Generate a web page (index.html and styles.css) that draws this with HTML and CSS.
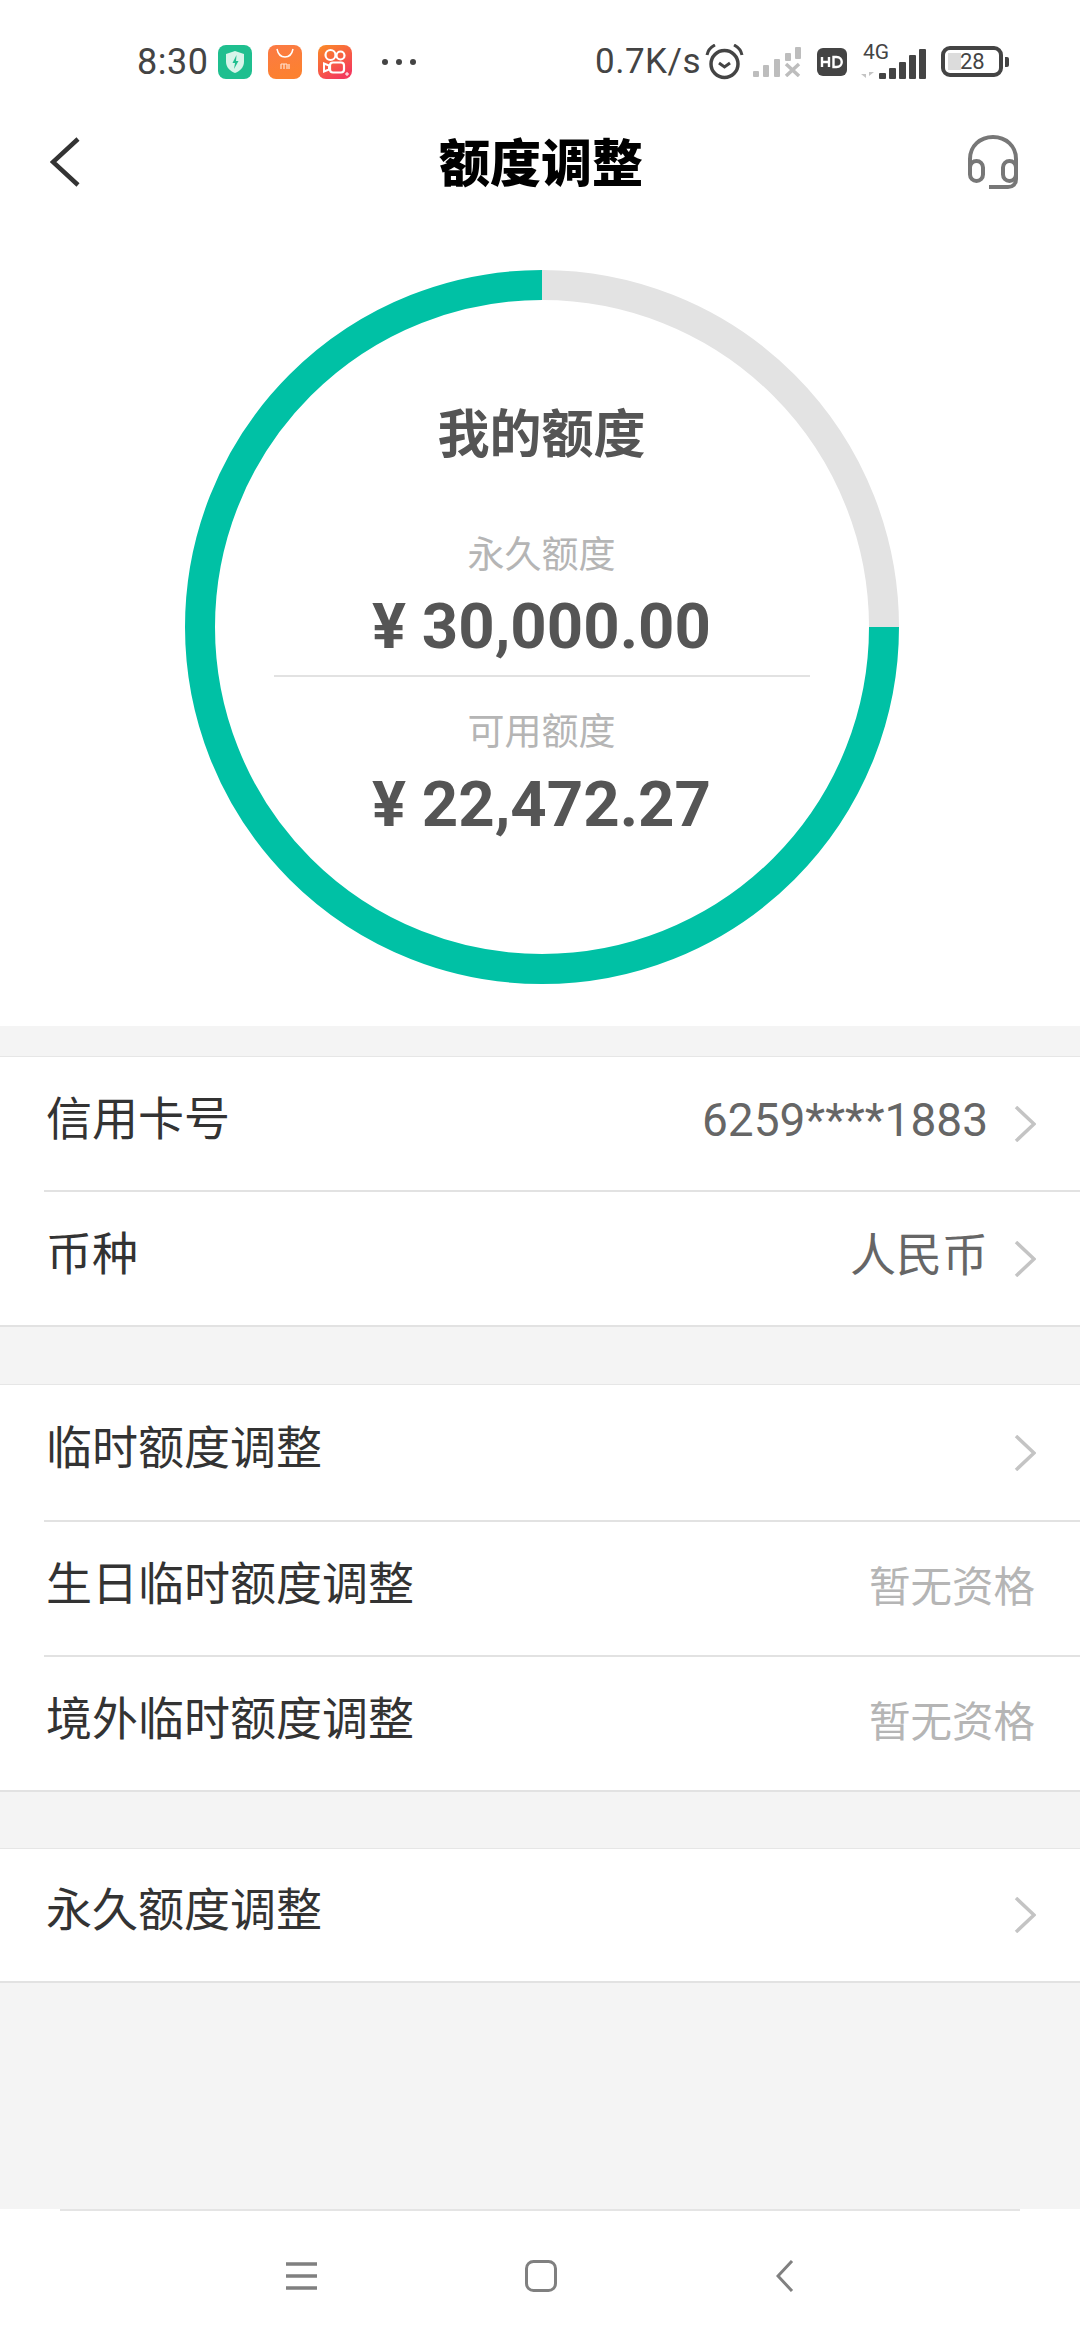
FILE: index.html
```html
<!DOCTYPE html>
<html lang="zh-CN">
<head>
    <meta charset="UTF-8">
    <meta name="viewport" content="width=device-width, initial-scale=1.0">
    <title>额度调整</title>
    <link rel="stylesheet" href="styles.css">
</head>
<body>
    <div class="page">
        <div class="status-bar">
            <span class="time">8:30</span>
            <svg class="app-icon" viewBox="0 0 34 34">
                <rect width="34" height="34" rx="8" fill="#1fbf8f"/>
                <path d="M17 6l9 3v8c0 5-4 9-9 11-5-2-9-6-9-11V9z" fill="#d8f5ea"/>
                <path d="M18.500 10l-4 8h2.500l-1 6 4.500-8h-2.500z" fill="#1fbf8f"/>
            </svg>
            <svg class="app-icon" viewBox="0 0 34 34">
                <defs>
                    <linearGradient id="mi" x1="0" y1="0" x2="0.300" y2="1">
                        <stop offset="0" stop-color="#fb7a45"/>
                        <stop offset="1" stop-color="#fc8130"/>
                    </linearGradient>
                </defs>
                <rect width="34" height="34" rx="8" fill="url(#mi)"/>
                <path d="M9 4c1 5 4 8 8 8s7-3 8-8" fill="none" stroke="#fff" stroke-width="1.500"/>
                <path d="M13 24v-5M16 24v-5M19 24v-5M13 19h6M21 19v5" fill="none" stroke="#ffe3d2" stroke-width="1.200"/>
            </svg>
            <svg class="app-icon" viewBox="0 0 34 34">
                <defs>
                    <linearGradient id="ks" x1="0" y1="0" x2="0.600" y2="1">
                        <stop offset="0" stop-color="#fb8d25"/>
                        <stop offset="1" stop-color="#f43a5c"/>
                    </linearGradient>
                </defs>
                <rect width="34" height="34" rx="8" fill="url(#ks)"/>
                <circle cx="12.500" cy="10" r="5" fill="none" stroke="#fff" stroke-width="2.200"/>
                <circle cx="22.500" cy="10.500" r="4" fill="none" stroke="#fff" stroke-width="2.200"/>
                <rect x="12" y="17.500" width="14" height="10" rx="3" fill="none" stroke="#fff" stroke-width="2.200"/>
                <path d="M11 20.500l-5-2v8l5-2z" fill="none" stroke="#fff" stroke-width="2"/>
                <path d="M27 29h4M29 27v4" stroke="#fff" stroke-width="1"/>
            </svg>
            <svg class="dots" viewBox="0 0 34 6">
                <circle cx="3" cy="3" r="3" fill="#444"/>
                <circle cx="17" cy="3" r="3" fill="#444"/>
                <circle cx="31" cy="3" r="3" fill="#444"/>
            </svg>
            <span class="speed">0.7K/s</span>
            <svg class="alarm" viewBox="0 0 39 36">
                <circle cx="19.500" cy="20" r="13.500" fill="none" stroke="#444" stroke-width="3.500"/>
                <path d="M14 19l5.500 4 5.500-4" fill="none" stroke="#444" stroke-width="3"/>
                <path d="M2 11C3 6 6 3 10 1M37 11c-1-5-4-8-8-10" fill="none" stroke="#444" stroke-width="3"/>
            </svg>
            <svg class="signal-off" viewBox="0 0 48 30">
                <g fill="#bdbdbd">
                    <rect x="0" y="24" width="6" height="6" rx="1"/>
                    <rect x="10" y="18" width="6" height="12" rx="1"/>
                    <rect x="21" y="12" width="6" height="18" rx="1"/>
                    <rect x="32" y="6" width="6" height="8" rx="1"/>
                    <rect x="42" y="0" width="6" height="12" rx="1"/>
                </g>
                <path d="M33 17l13 12M46 17L33 29" stroke="#bdbdbd" stroke-width="3.500"/>
            </svg>
            <svg class="hd" viewBox="0 0 30 28">
                <rect width="30" height="28" rx="6" fill="#444"/>
                <path d="M5 9v10M12 9v10M5 14h7M16.500 9v10h3c7 0 7-10 0-10z" fill="none" stroke="#fff" stroke-width="2.400"/>
            </svg>
            <div class="net">
                <span class="net-label">4G</span>
                <svg class="net-bars" viewBox="0 0 66 36">
                    <path d="M6 24v10l-5-4h5zM9 22v10l5-4H9z" fill="#c4c4c4"/>
                    <g fill="#444">
                        <rect x="19" y="29" width="7" height="6" rx="1"/>
                        <rect x="29" y="24" width="7" height="11" rx="1"/>
                        <rect x="39" y="18" width="7" height="17" rx="1"/>
                        <rect x="49" y="11" width="7" height="24" rx="1"/>
                        <rect x="59" y="5" width="7" height="30" rx="1"/>
                    </g>
                </svg>
            </div>
            <div class="battery">
                <div class="battery-body">
                    <span class="battery-fill"></span>
                    <span class="battery-text">28</span>
                </div>
                <span class="battery-nub"></span>
            </div>
        </div>

        <div class="header">
            <svg class="back" viewBox="0 0 30 50">
                <path d="M28 2L3 25l25 23" fill="none" stroke="#333" stroke-width="4.500"/>
            </svg>
            <h1>额度调整</h1>
            <svg class="headset" viewBox="0 0 52 56">
                <path d="M3 36V24C3 11 13 2 26 2s23 9 23 22v20c0 5-3 8-8 8H22" fill="none" stroke="#777" stroke-width="4"/>
                <rect x="3" y="26" width="13" height="20" rx="6.500" fill="none" stroke="#777" stroke-width="4"/>
                <rect x="36" y="26" width="13" height="20" rx="6.500" fill="none" stroke="#777" stroke-width="4"/>
            </svg>
        </div>

        <div class="quota">
            <div class="ring">
                <svg class="ring-svg" viewBox="0 0 714 714">
                    <path d="M357 15A342 342 0 0 1 699 357" fill="none" stroke="#e3e3e3" stroke-width="30"/>
                    <path d="M699 357A342 342 0 1 1 357 15" fill="none" stroke="#00c1a5" stroke-width="30"/>
                </svg>
                <h2>我的额度</h2>
                <div class="quota-label first">永久额度</div>
                <div class="quota-amount">¥ 30,000.00</div>
                <div class="quota-line"></div>
                <div class="quota-label second">可用额度</div>
                <div class="quota-amount second">¥ 22,472.27</div>
            </div>
        </div>

        <div class="group first-group">
            <div class="row">
                <span class="row-label">信用卡号</span>
                <span class="row-value">6259****1883</span>
                <svg class="chevron" viewBox="0 0 22 36"><path d="M2 1l18 17L2 35" fill="none" stroke="#c4c4c4" stroke-width="3.500"/></svg>
            </div>
            <div class="row">
                <span class="row-label">币种</span>
                <span class="row-value">人民币</span>
                <svg class="chevron" viewBox="0 0 22 36"><path d="M2 1l18 17L2 35" fill="none" stroke="#c4c4c4" stroke-width="3.500"/></svg>
            </div>
        </div>

        <div class="group">
            <div class="row">
                <span class="row-label">临时额度调整</span>
                <svg class="chevron" viewBox="0 0 22 36"><path d="M2 1l18 17L2 35" fill="none" stroke="#c4c4c4" stroke-width="3.500"/></svg>
            </div>
            <div class="row">
                <span class="row-label">生日临时额度调整</span>
                <span class="row-note">暂无资格</span>
            </div>
            <div class="row">
                <span class="row-label">境外临时额度调整</span>
                <span class="row-note">暂无资格</span>
            </div>
        </div>

        <div class="group last-group">
            <div class="row">
                <span class="row-label">永久额度调整</span>
                <svg class="chevron" viewBox="0 0 22 36"><path d="M2 1l18 17L2 35" fill="none" stroke="#c4c4c4" stroke-width="3.500"/></svg>
            </div>
        </div>

        <div class="spacer"></div>

        <div class="nav">
            <div class="nav-line"></div>
            <div class="nav-icons">
                <svg class="nav-menu" viewBox="0 0 31 30">
                    <path d="M0 3h31M0 15h31M0 27h31" stroke="#808080" stroke-width="3.500"/>
                </svg>
                <svg class="nav-home" viewBox="0 0 32 32">
                    <rect x="1.500" y="1.500" width="29" height="29" rx="7" fill="none" stroke="#808080" stroke-width="3"/>
                </svg>
                <svg class="nav-back" viewBox="0 0 18 32">
                    <path d="M16 1L2 16l14 15" fill="none" stroke="#808080" stroke-width="3"/>
                </svg>
            </div>
        </div>
    </div>
</body>
</html>
```

FILE: styles.css
```css
* {
    box-sizing: border-box;
}

body {
    margin: 0;
    padding: 0;
    background-color: #f4f4f4;
    font-family: "Noto Sans CJK SC", Roboto, sans-serif;
}

.page {
    width: 1080px;
    height: 2340px;
    display: flex;
    flex-direction: column;
    overflow: hidden;
}

/* status bar */
.status-bar {
    height: 88px;
    padding-top: 35px;
    padding-left: 137px;
    background-color: #fff;
    display: flex;
    align-items: center;
    color: #444;
    font-family: Roboto, sans-serif;
}

.status-bar > * {
    flex-shrink: 0;
}

.time {
    width: 81px;
    font-size: 36px;
    line-height: 40px;
    letter-spacing: 0.5px;
}

.app-icon {
    width: 34px;
    height: 34px;
    margin-right: 16px;
}

.dots {
    width: 34px;
    height: 6px;
    margin-left: 14px;
    margin-right: 179px;
}

.speed {
    width: 110px;
    font-size: 35px;
    line-height: 40px;
    letter-spacing: 0.5px;
}

.alarm {
    width: 39px;
    height: 36px;
    margin-right: 9px;
}

.signal-off {
    width: 48px;
    height: 30px;
    margin-right: 16px;
}

.hd {
    width: 30px;
    height: 28px;
    margin-right: 13px;
}

.net {
    width: 66px;
    height: 36px;
    position: relative;
}

.net-bars {
    width: 66px;
    height: 36px;
    display: block;
}

.net-label {
    position: absolute;
    left: 3px;
    top: -3px;
    font-size: 21px;
    line-height: 22px;
}

.battery {
    margin-left: 15px;
    display: flex;
    align-items: center;
}

.battery-body {
    width: 62px;
    height: 31px;
    border: 4px solid #444;
    border-radius: 9px;
    padding: 3px;
    position: relative;
}

.battery-fill {
    display: block;
    width: 13px;
    height: 17px;
    background-color: #dcdcdc;
}

.battery-text {
    position: absolute;
    left: 15px;
    top: 0;
    font-size: 22px;
    line-height: 23px;
    color: #444;
}

.battery-nub {
    width: 4px;
    height: 10px;
    margin-left: 2px;
    border-radius: 0 2px 2px 0;
    background-color: #444;
}

/* title */
.header {
    height: 152px;
    padding: 0 61px 0 50px;
    background-color: #fff;
    display: grid;
    grid-template-columns: 1fr auto 1fr;
    align-items: center;
}

.back {
    width: 30px;
    height: 50px;
    margin-bottom: 4px;
}

.header h1 {
    margin: 0 0 8px 13px;
    font-size: 51px;
    line-height: 60px;
    font-weight: 900;
    color: #000;
}

.headset {
    width: 52px;
    height: 56px;
    margin-bottom: 2px;
    justify-self: end;
}

/* ring */
.quota {
    height: 786px;
    padding-top: 30px;
    padding-left: 3px;
    background-color: #fff;
    display: flex;
    justify-content: center;
}

.ring {
    width: 714px;
    height: 714px;
    padding-top: 131px;
    display: flex;
    flex-direction: column;
    align-items: center;
    position: relative;
}

.ring-svg {
    position: absolute;
    left: 0;
    top: 0;
    width: 714px;
    height: 714px;
}

.ring h2 {
    margin: 0;
    font-size: 52px;
    line-height: 60px;
    font-weight: 700;
    color: #555;
}

.quota-label {
    font-size: 37px;
    line-height: 40px;
    color: #b5b5b5;
}

.quota-label.first {
    margin-top: 71px;
}

.quota-label.second {
    margin-top: 32px;
}

.quota-amount {
    margin-top: 20px;
    font-family: Roboto, sans-serif;
    font-size: 63.5px;
    line-height: 70px;
    font-weight: 700;
    color: #555;
}

.quota-amount.second {
    margin-top: 21px;
}

.quota-line {
    width: 536px;
    height: 2px;
    margin-top: 13px;
    background-color: #e2e2e2;
}

/* rows */
.group {
    margin-top: 57px;
    background-color: #fff;
    border-top: 1px solid #e6e6e6;
    border-bottom: 2px solid #e2e2e2;
}

.first-group {
    margin-top: 30px;
}

.last-group {
    margin-top: 56px;
}

.row {
    height: 135px;
    margin-left: 44px;
    padding-right: 44px;
    display: flex;
    align-items: center;
    border-top: 2px solid #e2e2e2;
}

.row:first-child {
    border-top: none;
}

.first-group .row:first-child {
    height: 133px;
}

.last-group .row {
    height: 132px;
}

.row-label {
    flex: 1;
    margin-bottom: 18px;
    margin-left: 2px;
    font-size: 46px;
    line-height: 60px;
    color: #333;
}

.row-value {
    margin-bottom: 8px;
    margin-right: 26px;
    font-family: Roboto, "Noto Sans CJK SC", sans-serif;
    font-size: 46px;
    line-height: 60px;
    color: #666;
}

.row-note {
    margin-bottom: 10px;
    margin-right: 1px;
    font-size: 41.5px;
    line-height: 60px;
    color: #b5b5b5;
}

.chevron {
    width: 22px;
    height: 36px;
}

.spacer {
    flex: 1;
}

/* bottom nav */
.nav {
    height: 131px;
    background-color: #fff;
}

.nav-line {
    height: 2px;
    margin: 0 60px;
    background-color: #e4e4e4;
}

.nav-icons {
    height: 129px;
    display: flex;
    align-items: center;
    justify-content: center;
}

.nav-menu {
    width: 31px;
    height: 30px;
}

.nav-home {
    width: 32px;
    height: 32px;
    margin-left: 208px;
}

.nav-back {
    width: 18px;
    height: 32px;
    margin-left: 219px;
}
```
